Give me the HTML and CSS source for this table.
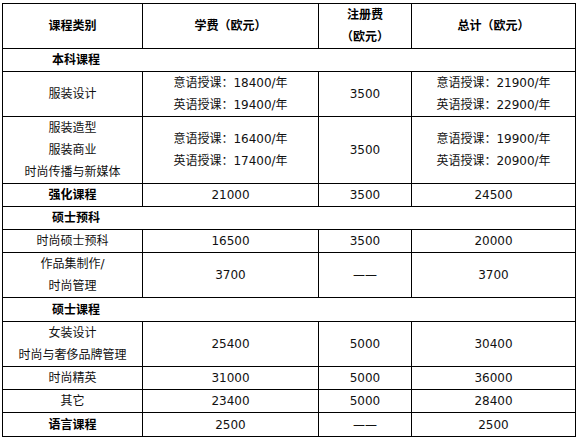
FILE: index.html
```html
<!DOCTYPE html>
<html lang="zh-CN">
<head>
<meta charset="utf-8">
<title>课程费用</title>
<link rel="stylesheet" href="styles.css">
</head>
<body>
<table class="fees">
  <colgroup>
    <col class="c1"><col class="c2"><col class="c3"><col class="c4">
  </colgroup>
  <tr class="head">
    <th>课程类别</th>
    <th>学费（欧元）</th>
    <th>注册费<br>（欧元）</th>
    <th>总计（欧元）</th>
  </tr>
  <tr class="section">
    <td colspan="4">本科课程</td>
  </tr>
  <tr>
    <td>服装设计</td>
    <td>意语授课：18400/年<br>英语授课：19400/年</td>
    <td>3500</td>
    <td>意语授课：21900/年<br>英语授课：22900/年</td>
  </tr>
  <tr>
    <td>服装造型<br>服装商业<br>时尚传播与新媒体</td>
    <td>意语授课：16400/年<br>英语授课：17400/年</td>
    <td>3500</td>
    <td>意语授课：19900/年<br>英语授课：20900/年</td>
  </tr>
  <tr>
    <td class="b">强化课程</td>
    <td>21000</td>
    <td>3500</td>
    <td>24500</td>
  </tr>
  <tr class="section">
    <td colspan="4">硕士预科</td>
  </tr>
  <tr>
    <td>时尚硕士预科</td>
    <td>16500</td>
    <td>3500</td>
    <td>20000</td>
  </tr>
  <tr>
    <td>作品集制作/<br>时尚管理</td>
    <td>3700</td>
    <td>——</td>
    <td>3700</td>
  </tr>
  <tr class="section tall">
    <td colspan="4">硕士课程</td>
  </tr>
  <tr>
    <td>女装设计<br>时尚与奢侈品牌管理</td>
    <td>25400</td>
    <td>5000</td>
    <td>30400</td>
  </tr>
  <tr>
    <td>时尚精英</td>
    <td>31000</td>
    <td>5000</td>
    <td>36000</td>
  </tr>
  <tr>
    <td>其它</td>
    <td>23400</td>
    <td>5000</td>
    <td>28400</td>
  </tr>
  <tr class="tall">
    <td class="b">语言课程</td>
    <td>2500</td>
    <td>——</td>
    <td>2500</td>
  </tr>
</table>
</body>
</html>
```

FILE: styles.css
```css
html, body {
  margin: 0;
  padding: 0;
  background: #ffffff;
}

body {
  font-family: "DejaVu Sans", "Noto Sans CJK SC", sans-serif;
  font-size: 12px;
  color: #111111;
}

.fees {
  margin: 3px 0 0 2px;
  width: 573px;
  table-layout: fixed;
  border-collapse: collapse;
  border: 1px solid #000000;
}

.c1 { width: 140px; }
.c2 { width: 176px; }
.c3 { width: 93px; }
.c4 { width: 164px; }

.fees th,
.fees td {
  border: 1px solid #000000;
  padding: 0;
  line-height: 22px;
  text-align: center;
  vertical-align: middle;
  font-weight: normal;
  white-space: nowrap;
}

.fees th,
.fees .b,
.section td {
  font-weight: bold;
  color: #000000;
}

.section td {
  text-align: left;
  padding-left: 49px;
}

.tall td {
  padding-top: 1px;
}
```
